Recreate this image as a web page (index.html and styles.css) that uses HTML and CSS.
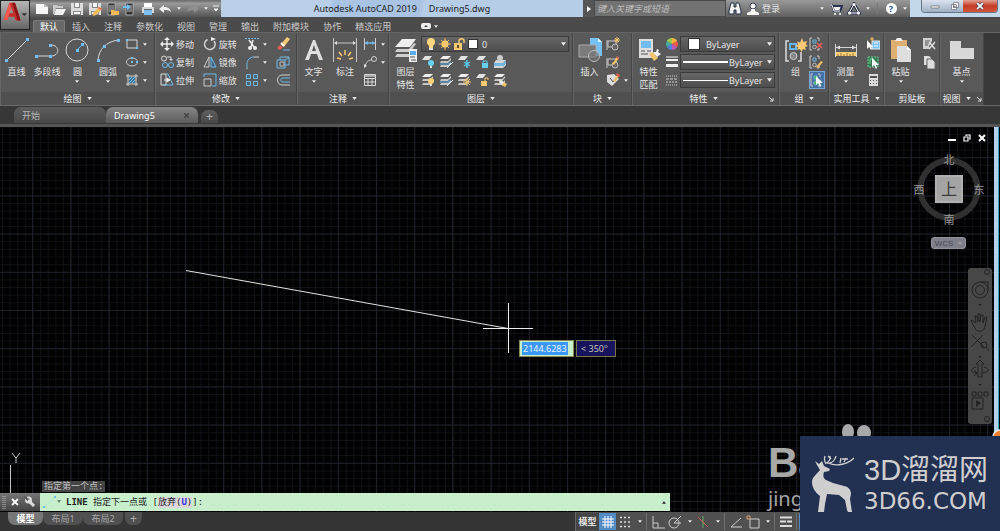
FILE: index.html
```html
<!DOCTYPE html>
<html lang="zh-CN">
<head>
<meta charset="utf-8">
<title>Autodesk AutoCAD 2019 - Drawing5.dwg</title>
<link rel="stylesheet" href="styles.css">
</head>
<body>
<svg class="defs" aria-hidden="true">
  <defs>
    <symbol id="down" viewBox="0 0 6 4"><path d="M0 0h6L3 4z" fill="#eee"/></symbol>
    <symbol id="new" viewBox="0 0 14 14"><path d="M1 2h8l4 3v7H1z" fill="#f6f6f6"/><path d="M9 2v3h4" fill="#bbb"/></symbol>
    <symbol id="open" viewBox="0 0 14 14"><path d="M1 3h4l1 1h5v2H4L2 12H1z" fill="#c9c9c9"/><path d="M4 7h10l-3 6H2z" fill="#efefef"/></symbol>
    <symbol id="save" viewBox="0 0 14 14"><path d="M1 1h12v12H1z" fill="#ddd"/><path d="M4 1h6v5H4zM3 9h8v4H3z" fill="#888"/><path d="M5 1h4v4H5zM4 10h6v2H4z" fill="#f6f6f6"/></symbol>
    <symbol id="pencil" viewBox="0 0 14 14"><path d="M5 11l6-6 3 2-6 6-3 1z" fill="#f0b95c"/><path d="M11 5l3 2-1 1-3-2z" fill="#e85a4a"/></symbol>
    <symbol id="phone" viewBox="0 0 14 14"><path d="M3 1h7v12H3z" fill="#333" stroke="#aaa"/><path d="M4 3h5v7H4z" fill="#777"/></symbol>
    <symbol id="print" viewBox="0 0 14 14"><path d="M3 1h8v4H3z" fill="#fff"/><path d="M1 5h12v6H1z" fill="#d8d8d8"/><path d="M3 8h8v5H3z" fill="#7cc0f2"/><path d="M3 7h8v1H3z" fill="#666"/></symbol>
    <symbol id="undo" viewBox="0 0 14 14"><path d="M1 7l5-4v2c4 0 7 2 7 5-2-2-4-2-7-2v3z" fill="#ededed"/></symbol>
    <symbol id="redo" viewBox="0 0 14 14"><path d="M13 7L8 3v2c-4 0-7 2-7 5 2-2 4-2 7-2v3z" fill="#909090"/></symbol>
    <symbol id="line" viewBox="0 0 24 24"><path d="M1 23L22 2" stroke="#d6d6d6" fill="none"/><path d="M0 21h3v3H0zM21 0h3v3h-3z" fill="#6fc0f7"/></symbol>
    <symbol id="pline" viewBox="0 0 24 24"><path d="M1 18h15c9 0 9-11 0-11" stroke="#d6d6d6" fill="none"/><path d="M0 17h3v3H0zM14 17h3v3h-3zM14 6h3v3h-3z" fill="#6fc0f7"/></symbol>
    <symbol id="circle" viewBox="0 0 24 24"><circle cx="12" cy="12" r="11" stroke="#d6d6d6" fill="none"/><path d="M12 12l5-5" stroke="#6fc0f7"/><path d="M11 11h3v3h-3zM16 5h3v3h-3z" fill="#6fc0f7"/></symbol>
    <symbol id="arc" viewBox="0 0 24 24"><path d="M2 22C3 11 10 4 22 2" stroke="#d6d6d6" fill="none"/><path d="M1 21h3v3H1zM7 7h3v3H7zM21 1h3v3h-3z" fill="#6fc0f7"/></symbol>
    <symbol id="rect" viewBox="0 0 14 14"><path d="M2 3h10v8H2z" stroke="#d6d6d6" fill="none"/><path d="M1 2h2v2H1zM11 10h2v2h-2z" fill="#6fc0f7"/></symbol>
    <symbol id="ellipse" viewBox="0 0 14 14"><ellipse cx="7" cy="7" rx="5.500" ry="4" stroke="#c8c8c8" fill="none"/><path d="M6 6h2v2H6zM6 2h2v2H6zM11 6h2v2h-2z" fill="#6fc0f7"/></symbol>
    <symbol id="hatch" viewBox="0 0 14 14"><path d="M1 3h12M1 11h12M3 1v12M11 1v12" stroke="#d6d6d6"/><path d="M4 4h6v6H4z" fill="#3f6f96"/><path d="M4 7l3-3M4 10l6-6M7 10l3-3" stroke="#7ec3f2"/></symbol>
    <symbol id="move" viewBox="0 0 14 14"><path d="M7 2v10M2 7h10" stroke="#eee" stroke-width="1.400"/><path d="M7 0l3 3H4zM7 14l3-3H4zM0 7l3-3v6zM14 7l-3-3v6z" fill="#eee"/></symbol>
    <symbol id="rotate" viewBox="0 0 14 14"><path d="M4.500 2.500A5.300 5.300 0 1 0 11 4" stroke="#d6d6d6" stroke-width="1.400" fill="none"/><path d="M8 4V0l5 2z" fill="#eee"/></symbol>
    <symbol id="copy" viewBox="0 0 14 14"><circle cx="4" cy="3.500" r="2.500" stroke="#ddd" fill="none"/><circle cx="5" cy="10" r="2.500" stroke="#6fb9ea" fill="none"/><circle cx="11" cy="10" r="2.500" stroke="#6fb9ea" fill="none"/><path d="M7 2h4v3" stroke="#ddd" fill="none"/><path d="M9 4h4l-2 2z" fill="#ddd"/></symbol>
    <symbol id="mirror" viewBox="0 0 14 14"><path d="M6 2v10H1z" stroke="#ccc" fill="none"/><path d="M8 2v10h5z" stroke="#6fb9ea" fill="#43657d"/></symbol>
    <symbol id="stretch" viewBox="0 0 14 14"><path d="M1 1h5v11H1z" stroke="#ddd" fill="none"/><path d="M6 1h2l5 11H3" stroke="#6fb9ea" fill="none"/><path d="M4 7h4M7 5l3 2-3 2z" stroke="#eee" fill="#eee"/></symbol>
    <symbol id="scale" viewBox="0 0 14 14"><path d="M1 4V1h12v12H9" stroke="#6fb9ea" fill="none"/><path d="M1 6h7v7H1z" stroke="#ccc" fill="none"/></symbol>
    <symbol id="trim" viewBox="0 0 14 14"><path d="M0 1.500h14" stroke="#6fb9ea" stroke-dasharray="2 1"/><path d="M4 3l5 7M8 3L6 10" stroke="#eee" stroke-width="1.500"/><circle cx="5" cy="11" r="2" fill="#eee"/><circle cx="10" cy="11" r="2" fill="#eee"/></symbol>
    <symbol id="fillet" viewBox="0 0 14 14"><path d="M2 13V9c0-4 3-7 7-7" stroke="#6fb9ea" fill="none"/><path d="M9 2h5M2 13v1" stroke="#ccc"/></symbol>
    <symbol id="array" viewBox="0 0 14 14"><path d="M1.500 1.500h4v4h-4zM8.500 1.500h4v4h-4zM1.500 8.500h4v4h-4z" stroke="#6fb9ea" fill="#496474"/><path d="M8.500 8.500h4v4h-4z" stroke="#6fb9ea" fill="none"/></symbol>
    <symbol id="erase" viewBox="0 0 14 14"><path d="M5 7l6-7 3 2-6 8z" fill="#f4ca78"/><path d="M4 8l3 2-3 3-3-2z" fill="#e86153"/><path d="M5 6l3 3" stroke="#fff" stroke-width="2"/><path d="M7 13h7" stroke="#6fb9ea"/></symbol>
    <symbol id="explode" viewBox="0 0 14 14"><path d="M1 5h8v8H1zM4 5V2h9v8H9M9 5l4-3" stroke="#6fb9ea" fill="none"/><path d="M4 7h4v4H4z" stroke="#bbb" fill="none"/></symbol>
    <symbol id="offset" viewBox="0 0 14 14"><path d="M14 2H6c-6 0-6 10 0 10h8" stroke="#ccc" fill="none"/><path d="M14 5H7c-3 0-3 4 0 4h7" stroke="#6fb9ea" fill="none"/></symbol>
    <symbol id="text" viewBox="0 0 24 24"><path d="M3 22L11 2h2l8 20h-4l-2-6H9l-2 6zM10 13h4l-2-6z" fill="#dedede"/></symbol>
    <symbol id="dim" viewBox="0 0 24 24"><path d="M.5 0v24M23.500 0v24M2 5h20" stroke="#c6c6c6" fill="none"/><path d="M1 5l3-2v4zM23 5l-3-2v4z" fill="#ddd"/><path d="M12 12v5M6 14l3 4M18 14l-3 4M4 20l4 1M20 20l-4 1" stroke="#f7c46c" stroke-width="1.500"/></symbol>
    <symbol id="lindim" viewBox="0 0 14 14"><path d="M1.500 1v12M12.500 1v12" stroke="#ccc"/><path d="M2 6h10" stroke="#6fb9ea" stroke-width="1.500"/><path d="M2 6l3-2v4zM12 6L9 4v4z" fill="#6fb9ea"/></symbol>
    <symbol id="leader" viewBox="0 0 14 14"><path d="M2 12c1-5 3-7 7-7" stroke="#ccc" fill="none"/><circle cx="11" cy="4" r="2.500" stroke="#ccc" fill="none"/><path d="M1 13V9l3 2z" fill="#ddd"/></symbol>
    <symbol id="table" viewBox="0 0 14 14"><path d="M1.500 1.500h11v11h-11zM2 5.500h10M2 9h10M5 5v7M9 5v7" stroke="#d8d8d8" fill="none"/><path d="M2 2h10v2H2z" fill="#aaa"/></symbol>
    <symbol id="layers" viewBox="0 0 24 24"><path d="M8 1h14l-6 8H1z" fill="#eee"/><path d="M3 11h12l5-6 2 1-6 8H1zM3 16h12v3H1z" fill="#cfcfcf"/><path d="M15 11h8v13h-8z" fill="#efefef"/><path d="M16 13h6v4h-6z" fill="#58aeea"/><path d="M16 19h5M17 22h5" stroke="#555"/></symbol>
    <symbol id="lay" viewBox="0 0 14 14"><path d="M4 1h7L8 5H1z" fill="#e2e2e2"/></symbol>
    <symbol id="lays" viewBox="0 0 14 14"><path d="M4 1h8L9 4H1z" fill="#eee"/><path d="M2 6h7l3-3v2L9 8H1zM2 10h7l3-3v2l-3 3H1z" fill="#c5c5c5"/></symbol>
    <symbol id="bulb" viewBox="0 0 14 14"><circle cx="7" cy="5" r="4" fill="#ffd77e"/><path d="M5 8h4v3H5z" fill="#ffd77e"/><path d="M5 11h4v2H5z" fill="#ddd"/></symbol>
    <symbol id="sun" viewBox="0 0 14 14"><circle cx="7" cy="7" r="3.500" fill="#ffd77e"/><path d="M7 1v12M1 7h12M3 3l8 8M11 3l-8 8" stroke="#f5bd60"/></symbol>
    <symbol id="lock" viewBox="0 0 14 14"><path d="M7 7V4c0-3 5-3 5 0v2" stroke="#f8c873" stroke-width="1.500" fill="none"/><path d="M2 6h8v7H2z" fill="#f8c873"/><path d="M5 8h2v3H5z" fill="#604a20"/></symbol>
    <symbol id="insert" viewBox="0 0 24 24"><path d="M12 0h8l4 4v14H12z" fill="#75c1f4"/><path d="M20 0v4h4z" fill="#d9efff"/><path d="M1 7h17v12H1z" stroke="#aaa" fill="#7b7b7b"/><circle cx="16" cy="18" r="5.500" stroke="#bbb" fill="#777" fill-opacity=".6"/></symbol>
    <symbol id="block" viewBox="0 0 14 14"><path d="M2 4h8v6H2zM1 3v10" stroke="#ccc" fill="none"/><circle cx="9" cy="10" r="3" stroke="#bbb" fill="#666"/></symbol>
    <symbol id="attr" viewBox="0 0 14 14"><path d="M1 2l7-1 5 5-7 7-5-4z" fill="#ddd"/><path d="M4 5l3 4 3-4" stroke="#555" fill="none"/></symbol>
    <symbol id="match" viewBox="0 0 24 24"><path d="M2 1h14v19H2z" fill="#ddd"/><path d="M4 3h10v7H4z" fill="#71bdf0"/><path d="M4 13h4M10 13h4M4 16h7" stroke="#555"/><path d="M12 16l5 7 4-3-5-6z" fill="#f5c46e"/><path d="M16 14l4 5 4-3-3-2 1-2-2-1-1 3z" fill="#f5f5f5"/></symbol>
    <symbol id="wheel" viewBox="0 0 14 14"><path d="M7 7V1a6 6 0 0 1 5.200 3z" fill="#f7b13c"/><path d="M7 7l5.200-3a6 6 0 0 1 0 6z" fill="#ee5f43"/><path d="M7 7l5.200 3A6 6 0 0 1 7 13z" fill="#bd59b0"/><path d="M7 7v6a6 6 0 0 1-5.200-3z" fill="#547edc"/><path d="M7 7l-5.200 3a6 6 0 0 1 0-6z" fill="#43aa9d"/><path d="M7 7L1.800 4A6 6 0 0 1 7 1z" fill="#9bc94e"/></symbol>
    <symbol id="weights" viewBox="0 0 14 14"><path d="M1 2h12" stroke="#eee"/><path d="M1 5h12" stroke="#eee" stroke-width="2"/><path d="M1 10.500h12" stroke="#eee" stroke-width="3"/></symbol>
    <symbol id="types" viewBox="0 0 14 14"><path d="M1 3h12M1 12h12" stroke="#ccc" stroke-dasharray="1 1"/><path d="M1 6h12" stroke="#ccc" stroke-dasharray="3 1"/><path d="M1 9h12" stroke="#ccc" stroke-dasharray="2 1"/></symbol>
    <symbol id="group" viewBox="0 0 24 24"><path d="M5 3H2v20h3M14 23h3v-9" stroke="#ddd" stroke-width="1.500" fill="none"/><path d="M6 6h6v5H6z" stroke="#65b8ef" stroke-width="2" fill="none"/><circle cx="9.500" cy="18" r="3.500" fill="#888" stroke="#ccc"/><path d="M18 0l1.500 4L23 3l-1 3.500L24 8l-3 1 1 3-3-1-1.500 3-1.500-3-3 1 1-3-3-1 3-1.500-1-3 3 1z" fill="#ffc873"/></symbol>
    <symbol id="grp" viewBox="0 0 14 14"><path d="M3 1H1v12h2M8 1h2v3M8 13h2v-2" stroke="#ccc" fill="none"/><path d="M4 3h3v3H4z" stroke="#6fb9ea" fill="none"/><circle cx="5.500" cy="10" r="1.800" stroke="#bbb" fill="none"/></symbol>
    <symbol id="cursor" viewBox="0 0 14 14"><path d="M6 3v9l2-2 2 4 1-1-1-3h3z" fill="#fff"/></symbol>
    <symbol id="measure" viewBox="0 0 24 24"><path d="M1.500 6v13M22.500 6v13M2 9.500h20" stroke="#d5d5d5"/><path d="M2 9.500l4-2v4zM22 9.500l-4-2v4z" fill="#ddd"/><path d="M2 14h20v4H2z" fill="#ffd177"/><path d="M4 16v2M7 15v3M10 16v2M13 15v3M16 16v2M19 15v3" stroke="#947034"/></symbol>
    <symbol id="quick" viewBox="0 0 14 14"><path d="M6 4h8v8H6z" fill="#78c1f2" stroke="#eee"/><path d="M8 6h4M8 9h4" stroke="#fff"/><path d="M1 3v9l2-2 2 3 1-1-1-2h2z" fill="#fff"/><path d="M6 0v4M4 2h4" stroke="#f8bf63"/></symbol>
    <symbol id="calc" viewBox="0 0 14 14"><path d="M3 1h9v12H3z" fill="#dcdcdc"/><path d="M4 3h7v2H4zM4 7h1v1H4zM7 7h1v1H7zM10 7h1v1h-1zM4 10h1v1H4zM7 10h1v1H7zM10 10h1v1h-1z" fill="#505050"/></symbol>
    <symbol id="paste" viewBox="0 0 24 24"><path d="M2 2h16v19H2z" fill="#ddb071"/><path d="M6 3l2-3h4l2 3z" fill="#eee"/><path d="M8 8h10l4 4v12H8z" fill="#dedede"/><path d="M18 8v4h4z" fill="#fff"/></symbol>
    <symbol id="cut" viewBox="0 0 14 14"><path d="M1 1h9v3L7 9v3H1z" fill="#d1d1d1"/><path d="M3 4h5M3 6h4M3 8h3" stroke="#555"/><path d="M7 5l6 7M13 5l-6 7" stroke="#ddd" stroke-width="1.500"/></symbol>
    <symbol id="pages" viewBox="0 0 14 14"><path d="M2 1h5l2 2v7H2z" fill="#ddd"/><path d="M5 4h5l3 3v7H5z" fill="#ddd" stroke="#666"/></symbol>
    <symbol id="base" viewBox="0 0 24 24"><path d="M0 3h11v7h13v11H0z" fill="#d8d8d8"/></symbol>
    <symbol id="bino" viewBox="0 0 14 14"><path d="M3 1h3v4h2V1h3l2 8v3H8V8H6v4H1V9z" fill="#f1f1f1" stroke="#253246"/></symbol>
    <symbol id="user" viewBox="0 0 14 14"><circle cx="7" cy="4" r="3" fill="#f5f5f5" stroke="#38445d"/><path d="M5 7h4v2l4 2v2H1v-2l4-2z" fill="#f5f5f5"/></symbol>
    <symbol id="cart" viewBox="0 0 14 14"><path d="M1 3h2l2 6h6l2-5H4" stroke="#273250" stroke-width="2" fill="#eee"/><path d="M1 3h2l2 6h6" stroke="#fff" fill="none"/><circle cx="6" cy="12" r="1" fill="#fff"/><circle cx="11" cy="12" r="1" fill="#fff"/></symbol>
    <symbol id="apps" viewBox="0 0 14 14"><path d="M7 2l5 9H2z" stroke="#273250" stroke-width="3" fill="none"/><path d="M7 2l5 9H2z" stroke="#fff" fill="none"/><circle cx="7" cy="2.500" r="1.500" fill="#fff"/><circle cx="2.500" cy="11" r="1.500" fill="#fff"/><circle cx="11.500" cy="11" r="1.500" fill="#fff"/></symbol>
  </defs>
</svg>

<header class="top">
  <button class="app-button" aria-label="应用程序菜单">
    <svg class="app-logo" viewBox="0 0 30 30"><path d="M3 20L9 2h6l6 19h-5l-2-4H8l-1 3zM9 13h4l-2-6z" fill="#c52e29"/><path d="M3 20L9 2l2 5-4 13z" fill="#f05a4f"/><path d="M12 2h3l6 19h-3z" fill="#8b1417"/><path d="M22 13h6l-3 3z" fill="#333"/></svg>
  </button>
  <div class="top-rows">
    <div class="titlebar">
      <div class="quick">
        <button aria-label="新建"><svg class="s"><use href="#new"/></svg></button>
        <button aria-label="打开"><svg class="s"><use href="#open"/></svg></button>
        <button aria-label="保存"><svg class="s"><use href="#save"/></svg></button>
        <button aria-label="另存为"><svg class="s"><use href="#save"/><use href="#pencil"/></svg></button>
        <button aria-label="从移动设备打开"><svg class="s"><use href="#phone"/><path d="M6 8h3l1 1h4v4H6z" fill="#f1b95a"/></svg></button>
        <button aria-label="保存到移动设备"><svg class="s"><use href="#phone"/><path d="M0 4h4V2l4 3-4 3V6H0z" fill="#6fc0f7"/></svg></button>
        <button aria-label="打印"><svg class="s"><use href="#print"/></svg></button>
        <button aria-label="放弃"><svg class="s"><use href="#undo"/></svg></button>
        <button class="tiny" aria-label="放弃列表"><svg class="d"><use href="#down"/></svg></button>
        <button aria-label="重做"><svg class="s"><use href="#redo"/></svg></button>
        <button class="tiny" aria-label="重做列表"><svg class="d"><use href="#down"/></svg></button>
        <button class="tiny" aria-label="自定义"><svg class="customize" viewBox="0 0 8 8"><path d="M1 1h6M2 4h4L4 6z" fill="#eee" stroke="#eee"/></svg></button>
      </div>
      <div class="title"><span>Autodesk AutoCAD 2019</span><span>Drawing5.dwg</span></div>
      <div class="info">
        <button class="expand" aria-label="展开"><svg class="play" viewBox="0 0 6 6"><path d="M1 0l4 3-4 3z" fill="#fff"/></svg></button>
        <input class="search" type="text" placeholder="键入关键字或短语" aria-label="键入关键字或短语">
        <div class="account">
          <button aria-label="搜索"><svg class="s"><use href="#bino"/></svg></button>
          <button class="login"><svg class="s"><use href="#user"/></svg>登录</button>
          <button class="tiny push" aria-label="账户"><svg class="d"><use href="#down"/></svg></button>
          <button aria-label="商店"><svg class="s"><use href="#cart"/></svg></button>
          <button aria-label="应用"><svg class="s"><use href="#apps"/></svg></button>
          <button class="tiny" aria-label="应用列表"><svg class="d"><use href="#down"/></svg></button>
          <i class="rule"></i>
          <button class="help" aria-label="帮助"><span>?</span></button>
          <button class="tiny" aria-label="帮助列表"><svg class="d"><use href="#down"/></svg></button>
        </div>
      </div>
      <div class="winbox">
        <div class="winbuttons">
          <button class="min" aria-label="最小化"><svg class="s"><path d="M3 7h8v2H3z" fill="#fff" stroke="#666" stroke-width=".7"/></svg></button>
          <button class="restore" aria-label="还原"><svg class="glyph" viewBox="0 0 14 14"><path d="M5 2h7v7H5zM2 5h7v7H2zM5 7h2v2H5z" fill="#fff" stroke="#667"/></svg></button>
          <button class="close" aria-label="关闭"><svg class="glyph" viewBox="0 0 14 14"><path d="M3 3l8 8M11 3l-8 8" stroke="#445" stroke-width="4.500"/><path d="M3 3l8 8M11 3l-8 8" stroke="#fff" stroke-width="2.500"/></svg></button>
        </div>
      </div>
    </div>
    <nav class="tabs">
      <button class="on">默认</button><button>插入</button><button>注释</button><button>参数化</button><button>视图</button><button>管理</button><button>输出</button><button>附加模块</button><button>协作</button><button>精选应用</button>
      <button class="mode" aria-label="最小化功能区"><svg class="badge" viewBox="0 0 10 6"><rect width="10" height="6" rx="2" fill="#eee"/><path d="M3 4h4L5 2z" fill="#444"/></svg><svg class="d"><use href="#down"/></svg></button>
    </nav>
  </div>
</header>

<main class="ribbon">
  <section class="panel">
    <div class="body draw">
      <button class="big"><svg class="b"><use href="#line"/></svg>直线</button>
      <button class="big"><svg class="b"><use href="#pline"/></svg>多段线</button>
      <button class="big"><svg class="b"><use href="#circle"/></svg>圆<svg class="d"><use href="#down"/></svg></button>
      <button class="big"><svg class="b"><use href="#arc"/></svg>圆弧<svg class="d"><use href="#down"/></svg></button>
      <div class="stack">
        <button aria-label="矩形"><svg class="s"><use href="#rect"/></svg><svg class="d"><use href="#down"/></svg></button>
        <button aria-label="椭圆"><svg class="s"><use href="#ellipse"/></svg><svg class="d"><use href="#down"/></svg></button>
        <button aria-label="图案填充"><svg class="s"><use href="#hatch"/></svg><svg class="d"><use href="#down"/></svg></button>
      </div>
    </div>
    <button class="foot">绘图<svg class="d"><use href="#down"/></svg></button>
  </section>
  <section class="panel">
    <div class="body modify">
      <div class="stack labelled">
        <button><svg class="s"><use href="#move"/></svg>移动</button>
        <button><svg class="s"><use href="#copy"/></svg>复制</button>
        <button><svg class="s"><use href="#stretch"/></svg>拉伸</button>
      </div>
      <div class="stack labelled">
        <button><svg class="s"><use href="#rotate"/></svg>旋转</button>
        <button><svg class="s"><use href="#mirror"/></svg>镜像</button>
        <button><svg class="s"><use href="#scale"/></svg>缩放</button>
      </div>
      <div class="stack">
        <button aria-label="修剪"><svg class="s"><use href="#trim"/></svg><svg class="d"><use href="#down"/></svg></button>
        <button aria-label="圆角"><svg class="s"><use href="#fillet"/></svg><svg class="d"><use href="#down"/></svg></button>
        <button aria-label="阵列"><svg class="s"><use href="#array"/></svg><svg class="d"><use href="#down"/></svg></button>
      </div>
      <div class="stack">
        <button aria-label="删除"><svg class="s"><use href="#erase"/></svg></button>
        <button aria-label="分解"><svg class="s"><use href="#explode"/></svg></button>
        <button aria-label="偏移"><svg class="s"><use href="#offset"/></svg></button>
      </div>
    </div>
    <button class="foot">修改<svg class="d"><use href="#down"/></svg></button>
  </section>
  <section class="panel">
    <div class="body">
      <button class="big"><svg class="b"><use href="#text"/></svg>文字<svg class="d"><use href="#down"/></svg></button>
      <button class="big"><svg class="b"><use href="#dim"/></svg>标注</button>
      <div class="stack">
        <button aria-label="线性"><svg class="s"><use href="#lindim"/></svg><svg class="d"><use href="#down"/></svg></button>
        <button aria-label="引线"><svg class="s"><use href="#leader"/></svg><svg class="d"><use href="#down"/></svg></button>
        <button aria-label="表格"><svg class="s"><use href="#table"/></svg></button>
      </div>
    </div>
    <button class="foot">注释<svg class="d"><use href="#down"/></svg></button>
  </section>
  <section class="panel">
    <div class="body">
      <button class="big"><svg class="b"><use href="#layers"/></svg>图层<br>特性</button>
      <div class="stack wide">
        <div class="combo">
          <svg class="s"><use href="#bulb"/></svg><svg class="s"><use href="#sun"/></svg><svg class="s"><use href="#lock"/></svg><i class="swatch"></i>
          <select aria-label="图层"><option>0</option></select><svg class="d"><use href="#down"/></svg>
        </div>
        <div class="icons">
          <button aria-label="关"><svg class="s"><use href="#lay"/><circle cx="10" cy="8" r="3" fill="#6bd0ee"/><path d="M9 11h2v2H9z" fill="#ddd"/></svg></button>
          <button aria-label="隔离"><svg class="s"><use href="#lays"/><path d="M1 9h9l2-2" stroke="#58aeea" fill="none"/><path d="M8 13l6-6" stroke="#eee"/></svg></button>
          <button aria-label="冻结"><svg class="s"><use href="#lay"/><path d="M10 5v8M7 7l6 4M13 7l-6 4" stroke="#58c8e6" stroke-width="1.500"/></svg></button>
          <button aria-label="锁定"><svg class="s"><use href="#lay"/><path d="M8 8V6h4v2" stroke="#68cdeb" fill="none"/><path d="M7 8h6v5H7z" fill="#68cdeb"/></svg></button>
          <button aria-label="置为当前"><svg class="s"><path d="M3 5h10l-3 3H1zM1 11h9l3-3v2l-3 3H1z" fill="#d5d5d5"/><circle cx="7" cy="3" r="3" fill="#ccc"/><path d="M1 8h9l3-3v3l-3 3H1z" fill="#71b8e9"/></svg></button>
        </div>
        <div class="icons">
          <button aria-label="打开图层"><svg class="s"><use href="#lays"/><circle cx="10" cy="8" r="3" fill="#ffd276"/><path d="M9 11h2v2H9z" fill="#ddd"/></svg></button>
          <button aria-label="取消隔离"><svg class="s"><use href="#lays"/><path d="M1 9h9l2-2" stroke="#58aeea" fill="none"/><path d="M8 13l6-6" stroke="#eee"/></svg></button>
          <button aria-label="解冻"><svg class="s"><use href="#lays"/><path d="M10 5v8M6 9h8M7 6l6 6M13 6l-6 6" stroke="#f8c873"/></svg></button>
          <button aria-label="解锁"><svg class="s"><use href="#lay"/><path d="M10 8V5h3v2" stroke="#f8c873" fill="none"/><path d="M6 8h6v5H6z" fill="#f8c873"/></svg></button>
          <button aria-label="匹配图层"><svg class="s"><use href="#lays"/><path d="M7 6l5 4-2 3-4-4z" fill="#eee"/><path d="M11 9l3 2-2 3-3-2z" fill="#f4c46d"/></svg></button>
        </div>
      </div>
    </div>
    <button class="foot">图层<svg class="d"><use href="#down"/></svg></button>
  </section>
  <section class="panel">
    <div class="body">
      <button class="big"><svg class="b"><use href="#insert"/></svg>插入</button>
      <div class="stack">
        <button aria-label="创建块"><svg class="s"><use href="#block"/><path d="M11 0v6M8 3h6M9 1l4 4M13 1L9 5" stroke="#f7c46c"/></svg></button>
        <button aria-label="编辑块"><svg class="s"><use href="#block"/><path d="M6 9l5-7 2 1-5 7z" fill="#f0be69"/><path d="M11 1l2 2-1 1-2-2z" fill="#e85a4a"/></svg></button>
        <button aria-label="编辑属性"><svg class="s"><use href="#attr"/><path d="M7 8l4-6 2 1-4 6z" fill="#f0be69"/><path d="M11 0l3 2-1 2-3-2z" fill="#e85a4a"/></svg><svg class="d"><use href="#down"/></svg></button>
      </div>
    </div>
    <button class="foot">块<svg class="d"><use href="#down"/></svg></button>
  </section>
  <section class="panel">
    <div class="body">
      <button class="big"><svg class="b"><use href="#match"/></svg>特性<br>匹配</button>
      <div class="stack wide props">
        <div class="prop"><svg class="s"><use href="#wheel"/></svg><div class="combo"><i class="swatch inset"></i><select aria-label="颜色"><option>ByLayer</option></select><svg class="d"><use href="#down"/></svg></div></div>
        <div class="prop"><svg class="s"><use href="#weights"/></svg><div class="combo"><i class="stroke"></i><select aria-label="线宽"><option>ByLayer</option></select><svg class="d"><use href="#down"/></svg></div></div>
        <div class="prop"><svg class="s"><use href="#types"/></svg><div class="combo"><i class="stroke thin"></i><select aria-label="线型"><option>ByLayer</option></select><svg class="d"><use href="#down"/></svg></div></div>
      </div>
    </div>
    <button class="foot has-launch">特性<svg class="d"><use href="#down"/></svg><svg class="launch" viewBox="0 0 6 6"><path d="M1 1l4 4M5 2v3H2" stroke="#ddd" fill="none"/></svg></button>
  </section>
  <section class="panel">
    <div class="body">
      <button class="big"><svg class="b"><use href="#group"/></svg>组</button>
      <div class="stack">
        <button aria-label="解除编组"><svg class="s"><use href="#grp"/><path d="M8 6l5 5M13 6l-5 5" stroke="#ef5b50" stroke-width="1.500"/></svg></button>
        <button aria-label="组编辑"><svg class="s"><use href="#grp"/><path d="M7 12l5-6 2 1-5 6z" fill="#f3be66"/></svg></button>
        <button class="active" aria-label="组选择"><svg class="s"><use href="#grp"/><path d="M4 3h4v3H4zM4 8h4v4H4z" fill="#53b584"/><use href="#cursor"/></svg></button>
      </div>
    </div>
    <button class="foot">组<svg class="d"><use href="#down"/></svg></button>
  </section>
  <section class="panel">
    <div class="body">
      <button class="big"><svg class="b"><use href="#measure"/></svg>测量<svg class="d"><use href="#down"/></svg></button>
      <div class="stack">
        <button aria-label="快速选择"><svg class="s"><use href="#quick"/></svg></button>
        <button aria-label="全部选择"><svg class="s"><path d="M2 2h10v10H2z" fill="#367a53" stroke="#69d094" stroke-dasharray="2 1"/><path d="M4 9V4h4v5" stroke="#69d094" fill="none"/><use href="#cursor"/></svg></button>
        <button aria-label="计算器"><svg class="s"><use href="#calc"/></svg></button>
      </div>
    </div>
    <button class="foot">实用工具<svg class="d"><use href="#down"/></svg></button>
  </section>
  <section class="panel">
    <div class="body">
      <button class="big"><svg class="b"><use href="#paste"/></svg>粘贴<svg class="d"><use href="#down"/></svg></button>
      <div class="stack">
        <button aria-label="剪切"><svg class="s"><use href="#cut"/></svg></button>
        <button aria-label="复制剪裁"><svg class="s"><use href="#pages"/></svg></button>
      </div>
    </div>
    <button class="foot">剪贴板</button>
  </section>
  <section class="panel">
    <div class="body single">
      <button class="big"><svg class="b"><use href="#base"/></svg>基点<svg class="d"><use href="#down"/></svg></button>
    </div>
    <button class="foot">视图<svg class="d"><use href="#down"/></svg><svg class="launch" viewBox="0 0 6 6"><path d="M1 1l4 4M5 2v3H2" stroke="#ddd" fill="none"/></svg></button>
  </section>
  <div class="rest"></div>
</main>

<nav class="files">
  <button class="file"><span>开始</span></button>
  <button class="file current"><span>Drawing5</span><svg class="x" viewBox="0 0 6 6"><path d="M0 0l6 6M6 0L0 6" stroke="#444" stroke-width="1.500"/></svg></button>
  <button class="file add" aria-label="新图形"><span>+</span></button>
</nav>

<section class="canvas">
  <svg class="drawing">
    <defs>
      <pattern id="minor" width="7.640" height="7.640" x="1.900" y="-8" patternUnits="userSpaceOnUse"><path d="M0 .5h7.640M.5 0v7.640" stroke="#101116" fill="none"/></pattern>
      <pattern id="major" width="38.200" height="38.200" x="-6.100" y="-8" patternUnits="userSpaceOnUse"><path d="M0 .5h38.200M.5 0v38.200" stroke="#1e202a" fill="none"/></pattern>
    </defs>
    <rect width="100%" height="100%" fill="#000"/>
    <rect width="100%" height="100%" fill="url(#minor)"/>
    <rect width="100%" height="100%" fill="url(#major)"/>
    <path d="M186 143.500L508 201.500" stroke="#e2e2e2" fill="none"/>
    <path d="M483 201.500h50M508.500 176v50" stroke="#eee" fill="none"/>
    <path d="M10.500 338v28M12 326l4 5 4-5M16 331v5" stroke="#c4c4c4" fill="none"/>
  </svg>
  <div class="dynamic">
    <input class="length" type="text" value="2144.6283" aria-label="长度">
    <output class="angle">&lt; 350°</output>
  </div>
  <div class="docbuttons">
    <button aria-label="最小化图形"><svg viewBox="0 0 8 8"><path d="M0 5h8v2H0z" fill="#fff"/></svg></button>
    <button aria-label="还原图形"><svg viewBox="0 0 8 8"><path d="M3 2V1h4v4H6M1 3h4v4H1z" stroke="#fff" stroke-width="1.200" fill="none"/></svg></button>
    <button aria-label="关闭图形"><svg viewBox="0 0 8 8"><path d="M1 1l6 6M7 1L1 7" stroke="#fff" stroke-width="2"/></svg></button>
  </div>
  <div class="cube">
    <svg class="ring" viewBox="0 0 64 64"><circle cx="32" cy="32" r="28.500" stroke="#303030" stroke-width="6" fill="none"/></svg>
    <span class="n">北</span><span class="w">西</span><button class="face">上</button><span class="e">东</span><span class="so">南</span>
  </div>
  <button class="wcs">WCS<svg class="d"><use href="#down"/></svg></button>
  <div class="navbar">
    <svg viewBox="0 0 24 156">
      <g stroke="#242424" fill="none">
        <circle cx="19" cy="4" r="2.500"/><circle cx="12" cy="22" r="8"/><circle cx="12" cy="22" r="4.500"/><path d="M12 14h8v8"/>
        <path d="M7 60l-4-7 1-1 4 3-1-7h2l1 6V46h2v8l1-7h2v8l2-6h2l-2 9c-1 5-3 5-6 5s-3-1-4-3z"/>
        <path d="M4 67l12 12M15 67L3 79"/><circle cx="16" cy="77" r="3"/><path d="M18 79l3 4"/>
        <path d="M10 109V96H8l4-4 4 4h-2v13zM8 99c-6 2-6 5 0 6M16 99c6 2 6 5-2 6M6 102l3 3-3 3"/>
        <path d="M4 124h4v4H4zM10 124h4v4h-4zM16 124h4v4h-4zM4 130h11v11H4z"/><circle cx="19" cy="151" r="2.500"/>
      </g>
      <path d="M8 132l5 3-5 4zM10 36h4l-2 2zM10 88h4l-2 2zM10 116h4l-2 2z" fill="#242424"/>
    </svg>
  </div>
  <div class="edge"></div>
  <svg class="ball" viewBox="0 0 8 8"><circle cx="8" cy="8" r="7" fill="#f08030" stroke="#eee" stroke-width="1.500"/></svg>
  <div class="watermark">
    <svg class="toes" viewBox="0 0 32 18"><ellipse cx="7" cy="9" rx="6" ry="8" fill="#a8a8a8"/><ellipse cx="23" cy="10" rx="7" ry="8" fill="#a8a8a8"/></svg>
    <div class="ba">Ba</div>
    <div class="jing">jing</div>
  </div>
  <div class="history">指定第一个点:</div>
  <div class="command">
    <div class="handle">
      <svg viewBox="0 0 40 18"><path d="M3 3v13M5 3v13" stroke="#bbb" stroke-dasharray="1 1"/><path d="M12 6l6 6M18 6l-6 6" stroke="#fff" stroke-width="1.800"/><path d="M28 7l6 6" stroke="#ddd" stroke-width="3"/><circle cx="28.500" cy="7" r="2.500" fill="none" stroke="#ddd" stroke-width="2"/><path d="M25 4l3 3" stroke="#555" stroke-width="2"/></svg>
    </div>
    <svg class="cmdicon" viewBox="0 0 22 14"><path d="M2 12L13 2" stroke="#b5dfd0"/><path d="M1 11h2v2H1zM12 1h2v2h-2z" fill="#6fc0f7"/><path d="M15 5h4l-2 3z" fill="#687"/></svg>
    <div class="prompt"><b>LINE</b> 指定下一点或 [<button>放弃(<em>U</em>)</button>]:</div>
    <button class="up" aria-label="命令历史"><svg class="d" viewBox="0 0 6 4"><path d="M0 4h6L3 0z" fill="#222"/></svg></button>
  </div>
</section>

<footer class="status">
  <div class="layouts">
    <button class="on"><span>模型</span></button><button><span>布局1</span></button><button><span>布局2</span></button><button class="plus" aria-label="新建布局"><span>+</span></button>
  </div>
  <div class="toggles">
    <button class="model">模型</button>
    <button class="lit" aria-label="栅格"><svg class="s"><path d="M4 1v12M7 1v12M10 1v12M1 4h12M1 7h12M1 10h12" stroke="#fff"/></svg></button>
    <button class="pick" aria-label="捕捉"><svg class="s"><path d="M2 2.500h10M2 7h10M2 11.500h10" stroke="#ddd" stroke-width="1.500" stroke-dasharray="2 2"/></svg><svg class="d"><use href="#down"/></svg></button>
    <i></i>
    <button aria-label="正交"><svg class="s"><path d="M2 1v12h12M2 8h5v5" stroke="#ccc" fill="none"/></svg></button>
    <button class="pick" aria-label="极轴"><svg class="s"><circle cx="6" cy="8" r="5" stroke="#ccc" fill="none"/><path d="M6 8l7-7M6 8h7" stroke="#ccc"/></svg><svg class="d"><use href="#down"/></svg></button>
    <button class="pick" aria-label="等轴测"><svg class="s"><path d="M7 1v12" stroke="#5fae5f"/><path d="M2 2l10 10" stroke="#c95f58"/></svg><svg class="d"><use href="#down"/></svg></button>
    <i></i>
    <button aria-label="对象捕捉追踪"><svg class="s"><path d="M13 12H2L12 3" stroke="#ccc" fill="none"/></svg></button>
    <button class="pick" aria-label="对象捕捉"><svg class="s"><path d="M4 4h9v9H4z" stroke="#ccc" fill="none"/><path d="M1 1h3v3H1z" stroke="#d8a06b" fill="#555"/></svg><svg class="d"><use href="#down"/></svg></button>
    <i></i>
    <button aria-label="线宽"><svg class="s"><path d="M1 2.500h12M1 6.500h6M8 6.500h5M1 11h12" stroke="#ddd" stroke-width="2"/></svg></button>
    <i></i>
    <button class="lit" aria-label="注释"><svg class="s"><path d="M7 1l2 5 4 6-5-2-1-4-3 7H1z" fill="#fff"/></svg></button>
  </div>
</footer>

<a class="brand" href="#3d66">
  <svg class="deer" viewBox="0 0 44 58"><path d="M3 6l4 3 3-3 2 5 6 3-1 2-5 1c-1 3-1 6 2 8l7 3 11 3c5 1 7 4 7 8l-1 5 2 13h-4l-1-2-2-10-6-5-12-1-2 10-1 8H6l2-16C4 38 0 33 0 27c0-5 5-8 8-12L5 10z" fill="#d0cfcf"/><path d="M14 9c-2-3-2-5-1-8M14 8c3-1 5-4 4-7M15 8c5 1 8-3 9-7M16 8c9 4 20 1 26-5M19 4l-3-3M28 8l1-5M32 7l2-4M36 4h-6" stroke="#d0cfcf" stroke-width="1.300" fill="none"/></svg>
  <span class="words"><span class="cn">3D溜溜网</span><span class="en">3D66.COM</span></span>
</a>
</body>
</html>
```
FILE: styles.css
```css
* { box-sizing: border-box; }
html, body { height: 100%; }
body {
  margin: 0;
  display: flex;
  flex-direction: column;
  overflow: hidden;
  background: #333;
  color: #e4e4e4;
  font: 9px/11px "Noto Sans", "Noto Sans CJK SC", sans-serif;
}
button, input, select {
  font: inherit;
  color: inherit;
  background: none;
  border: 0;
  padding: 0;
  margin: 0;
}
button {
  display: flex;
  align-items: center;
  justify-content: center;
  white-space: nowrap;
}
svg { flex: none; display: block; }
.defs { position: absolute; width: 0; height: 0; }
.s { width: 14px; height: 14px; }
.b { width: 24px; height: 24px; }
.d { width: 4px; height: 3px; }

/* Title bar and ribbon tabs */
.top { display: flex; height: 32px; flex: none; background: #4b4b4b; }
.app-button {
  width: 30px;
  height: 30px;
  background: linear-gradient(#b5b5b5, #666);
  border: 1px solid #222;
}
.app-logo { width: 28px; height: 28px; }
.top-rows { flex: 1; min-width: 0; display: flex; flex-direction: column; }
.titlebar { display: flex; height: 17px; background: #b9cfe8; }
.quick {
  display: flex;
  width: 191px;
  padding-left: 3px;
  background: linear-gradient(#6a6a6a, #999 20%, #555);
}
.quick button { width: 18px; }
.quick .tiny, .account .tiny { width: 10px; }
.customize { width: 8px; height: 8px; }
.title {
  flex: 1;
  display: flex;
  justify-content: center;
  align-items: center;
  gap: 12px;
  color: #222;
  white-space: nowrap;
  background: linear-gradient(100deg, #b9cfe8 0 30%, #a9c3e2 31% 55%, #b6cde8 56%);
}
.info { display: flex; width: 327px; background: #555; }
.expand { width: 11px; background: #555; }
.play { width: 6px; height: 6px; }
.search {
  width: 132px;
  padding: 0 2px;
  background: #727272;
  border: 1px solid #484848;
  font-style: italic;
}
.search::placeholder { color: #bdbdbd; opacity: 1; }
.account {
  flex: 1;
  display: flex;
  align-items: center;
  background: linear-gradient(#999, #606060);
}
.account button { width: 18px; height: 17px; }
.account .login { width: 38px; gap: 2px; }
.account .push { margin-left: auto; }
.rule { width: 1px; height: 12px; margin: 0 4px; background: #777; }
.help span {
  width: 11px;
  border-radius: 50%;
  background: #fff;
  color: #2855a0;
  font-weight: bold;
}
.winbox { width: 90px; display: flex; justify-content: flex-end; align-items: flex-start; padding-right: 2px; background: #c4d8ec; }
.winbuttons { display: flex; height: 13px; border: 1px solid #687384; border-top: 0; border-radius: 0 0 4px 4px; overflow: hidden; }
.glyph { width: 10px; height: 10px; }
.min { width: 25px; background: linear-gradient(#dae4ef, #9fb0c4); }
.restore { width: 16px; background: linear-gradient(#dae4ef, #9fb0c4); }
.close { width: 34px; background: linear-gradient(#e3a091, #c43b24 50%, #d4583d); }
.tabs { display: flex; align-items: flex-end; height: 15px; padding-left: 3px; color: #c9c9c9; }
.tabs button { height: 12px; padding: 0 7px; }
.tabs .on { background: #686868; color: #fff; border: 1px solid #7c7c7c; border-bottom: 0; border-radius: 2px 2px 0 0; padding: 0 6px; }
.tabs .mode { margin-left: 16px; gap: 3px; }
.badge { width: 10px; height: 6px; }

/* Ribbon panels */
.ribbon {
  flex: none;
  display: grid;
  grid-template-columns: 155fr 142fr 92fr 184fr 59fr 147fr 50fr 55fr 56fr 44fr 16fr;
  background: #595959;
  border-top: 1px solid #646464;
  border-bottom: 1px solid #6a6a6a;
}
.panel { min-width: 0; border-right: 1px solid #454545; border-left: 1px solid #666; display: flex; flex-direction: column; }
.rest { background: #383838; }
.body { display: flex; justify-content: space-between; height: 59px; padding: 2px 3px 0 2px; }
.draw { padding-right: 7px; }
.single { justify-content: center; }
.big {
  flex-direction: column;
  justify-content: flex-start;
  min-width: 27px;
  padding-top: 3px;
  line-height: 13px;
}
.big .b { margin-bottom: 3px; }
.big .d { margin-top: 2px; }
.stack { display: grid; grid-template-rows: repeat(3, 18px); }
.stack button { justify-content: flex-start; gap: 4px; }
.labelled button { gap: 2px; }
.modify { padding-left: 4px; padding-right: 6px; }
.wide { flex: 1; margin-left: 2px; }
.icons { display: flex; }
.icons button { width: 18px; }
.combo {
  flex: 1;
  min-width: 0;
  display: flex;
  align-items: center;
  height: 16px;
  margin: 1px 0;
  padding: 0 2px;
  background: linear-gradient(#666, #4e4e4e);
  border: 1px solid #3b3b3b;
}
.combo select { flex: 1; min-width: 0; appearance: none; padding-left: 4px; }
.combo .d { width: 5px; height: 4px; pointer-events: none; }
.swatch { width: 10px; height: 10px; background: #fff; border: 1px solid #333; margin-left: 2px; }
.swatch.inset { width: 12px; height: 12px; margin: 0 2px 0 5px; }
.stroke { width: 45px; height: 2px; background: #fff; }
.stroke.thin { height: 1px; }
.stroke + select { padding-left: 1px; }
.props { margin-left: 3px; }
.prop { display: flex; align-items: center; gap: 1px; }
.stack .active { background: #4673a6; border: 1px solid #7aa5d3; }
.foot { height: 13px; gap: 5px; background: #505050; color: #eee; }
.foot .d { width: 5px; }
.launch { width: 6px; height: 6px; }
.has-launch { padding-right: 4px; }
.has-launch::before { content: ""; width: 6px; margin-right: auto; }
.has-launch .launch { margin-left: auto; }

/* Drawing file tabs */
.files {
  flex: none;
  display: flex;
  align-items: flex-end;
  height: 21px;
  padding: 0 0 1px 14px;
  background: #373737;
  border-bottom: 3px solid #555;
}
.file {
  width: 92px;
  height: 16px;
  padding: 0 9px 0 8px;
  justify-content: space-between;
  color: #b5b5b5;
  background: linear-gradient(#5e5e5e, #484848);
  border-radius: 7px 7px 0 0;
}
.current { color: #fff; background: linear-gradient(#858585, #5c5c5c); }
.x { width: 5px; height: 5px; }
.add { width: 17px; height: 13px; margin-left: 3px; padding: 0; justify-content: center; font-size: 12px; }

/* Drawing area */
.canvas { position: relative; flex: 1; min-height: 0; background: #000; overflow: hidden; }
.drawing { position: absolute; width: 100%; height: 100%; }
.dynamic { position: absolute; left: 519px; top: 213px; display: flex; gap: 2px; }
.length {
  width: 55px;
  height: 17px;
  padding: 0 3px;
  color: #e9f4ff;
  border: 1px solid #8a8a52;
  background: linear-gradient(#3c97f5, #3c97f5) 2px 1px / 46px 13px no-repeat #c8efcc;
}
.angle { width: 40px; height: 17px; padding: 2px 4px; background: #17135c; border: 1px solid #777547; color: #c3c3b6; }
.docbuttons { position: absolute; right: 14px; top: 7px; display: flex; gap: 7px; }
.docbuttons svg { width: 8px; height: 8px; }
.cube {
  position: absolute;
  right: 13px;
  top: 25px;
  display: grid;
  grid-template-columns: 16px 44px 16px;
  grid-template-rows: 14px 46px 14px;
  place-items: center;
  color: #999;
  font-size: 11px;
}
.ring { position: absolute; width: 64px; height: 64px; left: 6px; top: 5px; }
.cube > * { z-index: 1; }
.cube .ring { z-index: 0; }
.n, .so { grid-column: 1 / -1; }
.face { width: 28px; height: 28px; background: #a4a4a4; border: 2px solid #b0b0b0; color: #3c3c3c; font-size: 16px; }
.wcs {
  position: absolute;
  right: 34px;
  top: 110px;
  width: 35px;
  height: 12px;
  gap: 5px;
  border-radius: 3px;
  background: #80808a;
  border: 1px solid #92929b;
  color: #45454d;
  font: 8px "Liberation Sans", sans-serif;
}
.wcs .d { opacity: .3; }
.navbar { position: absolute; right: 8px; top: 141px; border-radius: 3px; background: #474747; }
.navbar svg { width: 24px; height: 156px; }
.edge { position: absolute; right: 1px; top: 0; bottom: 0; width: 5px; background: #b3d3ec; border-right: 1px solid #38a3b5; }
.ball { position: absolute; right: 0; bottom: 75px; width: 8px; height: 8px; }
.watermark { position: absolute; right: 122px; bottom: -1px; width: 110px; color: #a8a8a8; }
.toes { width: 32px; height: 18px; margin-left: 73px; }
.ba { font: bold 42px/44px "Liberation Sans", sans-serif; }
.jing { font-size: 20px; line-height: 28px; }
.history {
  position: absolute;
  left: 42px;
  bottom: 20px;
  height: 11px;
  padding: 0 2px;
  background: #444;
  color: #c3c3c3;
  font-family: "DejaVu Sans Mono", "Noto Sans CJK SC", monospace;
}
.command {
  position: absolute;
  left: 0;
  bottom: 1px;
  width: 67%;
  height: 18px;
  display: flex;
  align-items: center;
  background: #c8efcc;
  color: #222;
}
.handle, .handle svg { width: 40px; height: 18px; }
.handle { background: linear-gradient(#777, #444); }
.cmdicon { width: 22px; height: 14px; margin: 0 2px; }
.prompt { white-space: pre; font-family: "DejaVu Sans Mono", "Noto Sans CJK SC", monospace; }
.prompt button { display: inline; background: #dcd5dc; }
.prompt em { color: #3434da; font-style: normal; font-weight: bold; }
.up { margin-left: auto; padding: 4px; }

/* Status bar */
.status { flex: none; display: flex; justify-content: space-between; height: 19px; background: #353535; }
.layouts { display: flex; padding-left: 8px; }
.layouts button {
  width: 40px;
  height: 13px;
  color: #aaa;
  background: #505050;
  border-radius: 0 0 7px 7px;
}
.layouts .on { width: 35px; color: #fff; background: #777; font-weight: bold; }
.layouts .plus { width: 17px; margin-left: 2px; font-size: 12px; }
.toggles { display: flex; align-items: center; width: 425px; background: #505050; border-left: 1px solid #666; }
.toggles button { width: 17px; height: 17px; }
.toggles .model { width: 23px; background: #454545; font-weight: bold; }
.toggles .pick { width: 28px; gap: 6px; }
.toggles i { width: 1px; height: 17px; margin: 0 2px; background: #707070; }
.toggles .lit { background: #538bc5; }

/* Brand plate */
.brand {
  position: fixed;
  right: 0;
  bottom: 0;
  width: 200px;
  height: 95px;
  display: flex;
  align-items: center;
  gap: 8px;
  padding-left: 12px;
  background: #223052;
  color: #d0cfcf;
  text-decoration: none;
}
.deer { width: 44px; height: 58px; }
.words { display: flex; flex-direction: column; white-space: nowrap; }
.cn { font: 29px/34px "Liberation Sans", "Noto Sans CJK SC", sans-serif; }
.en { font: 23px/28px "DejaVu Sans", sans-serif; }
```
